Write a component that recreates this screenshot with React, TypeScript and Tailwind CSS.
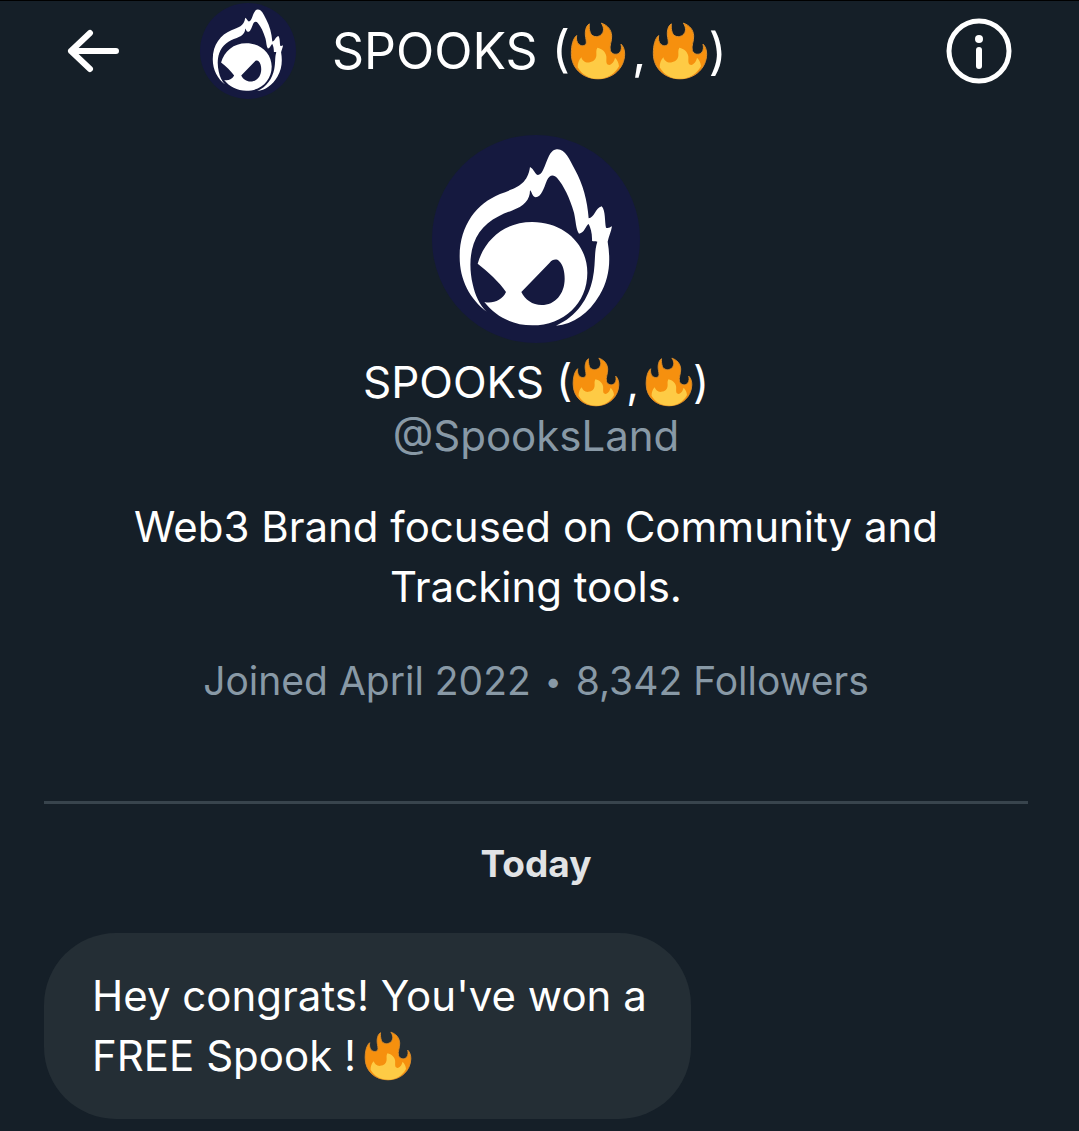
import clsx from 'clsx';

interface Profile {
  name: string;
  handle: string;
  bio: string;
  joined: string;
  followers: string;
}

interface Message {
  id: number;
  text: string;
  fire?: boolean;
}

const profile: Profile = {
  name: 'SPOOKS',
  handle: '@SpooksLand',
  bio: 'Web3 Brand focused on Community and Tracking tools.',
  joined: 'Joined April 2022',
  followers: '8,342 Followers',
};

const messages: Message[] = [
  { id: 1, text: "Hey congrats! You've won a FREE Spook !", fire: true },
];

function Fire({ className }: { className?: string }) {
  return (
    <svg
      viewBox="90 66 168 173"
      role="img"
      aria-label="fire"
      className={clsx('inline-block shrink-0', className)}
    >
      <path
        fill="#f6900e"
        stroke="#dc8e2c"
        strokeWidth="3"
        d="M184 69C202 75 214 88 215 107C216 123 207 137 211 151C215 164 232 166 240 156C245 149 245 140 243 132C250 138 254 149 254 162C253 204 219 236 174 236C129 236 94 205 94 160C94 136 99 115 110 106C108 116 110 127 117 133C126 140 139 137 139 126C139 117 135 108 136 96C137 84 141 75 148 71C147 79 148 90 151 98C156 110 171 113 182 105C194 96 192 80 184 69Z"
      />
      <path
        fill="#fecb45"
        d="M172 143C187 146 197 156 199 169C200 178 197 189 203 193C212 198 222 187 225 173C232 180 236 188 237 198C224 222 201 236 174 236C147 236 126 223 113 201C113 190 116 179 124 171C127 181 135 188 147 187C161 185 168 177 169 167C170 158 167 151 172 143Z"
      />
    </svg>
  );
}

function Avatar({ className }: { className?: string }) {
  return (
    <svg
      viewBox="36 30 624 624"
      role="img"
      aria-label="SPOOKS avatar"
      className={clsx('shrink-0', className)}
    >
      <circle cx="348" cy="342" r="312" fill="#15193f" />
      {/* flame outline */}
      <path
        fill="#fff"
        d="M200 560C150 522 119 465 119 395C119 300 170 236 240 207C285 189 322 182 330 126C342 132 346 150 354 150C378 148 378 76 410 73C436 71 447 101 465 134C489 178 502 226 506 280C522 280 526 249 545 244C557 256 554 291 558 308C564 311 570 307 576 304C573 321 566 336 563 350C573 410 568 460 539 510C507 566 459 598 408 602C470 575 506 520 518 462C528 416 521 383 532 350C526 347 519 350 516 347C517 327 512 309 506 297C497 301 494 324 477 326C467 310 468 289 462 263C449 218 431 182 412 160C401 147 388 150 381 166C371 191 364 217 347 217C335 214 337 201 330 196C330 224 313 244 275 257C224 274 179 304 161 356C148 394 149 438 158 477C165 510 178 539 200 560Z"
      />
      {/* head */}
      <path
        fill="#fff"
        d="M173 416C194 343 254 291 337 291C430 291 502 356 502 443C502 534 432 601 337 601C278 601 226 574 193 531C218 537 247 526 258 501C238 471 205 441 173 416Z"
      />
      <path
        fill="#15193f"
        d="M304 501L389 413C397 403 410 401 417 408C429 419 434 440 434 461C434 507 405 540 365 540C337 540 315 524 304 501Z"
      />
    </svg>
  );
}

function DisplayName({ large = false }: { large?: boolean }) {
  const fire = large ? 'h-[58px] w-14' : 'h-[50px] w-12';
  return (
    <span className="inline-flex items-center whitespace-pre">
      {profile.name} (<Fire className={fire} />
      <span className="px-[6px]">,</span>
      <Fire className={fire} />)
    </span>
  );
}

function Header() {
  return (
    <header className="flex h-[100px] items-center border-t border-black px-[67px]">
      <button type="button" aria-label="Back" className="shrink-0">
        <svg
          viewBox="0 0 53 44"
          className="h-11 w-[53px]"
          fill="none"
          stroke="#fff"
          strokeWidth="6"
          strokeLinecap="round"
          strokeLinejoin="round"
        >
          <path d="M23 4L4 22L23 40M4 22H49" />
        </svg>
      </button>
      <Avatar className="ml-20 size-24" />
      <h1 className="ml-9 flex-1 text-[50px] leading-[60px]">
        <DisplayName large />
      </h1>
      <button type="button" aria-label="Conversation info" className="shrink-0">
        <svg viewBox="0 0 66 66" className="size-[66px]">
          <circle cx="33" cy="33" r="30" fill="none" stroke="#fff" strokeWidth="5" />
          <circle cx="33" cy="21" r="4" fill="#fff" />
          <path d="M33 32V48" stroke="#fff" strokeWidth="6" strokeLinecap="round" />
        </svg>
      </button>
    </header>
  );
}

function ProfileCard() {
  return (
    <section className="flex flex-col items-center border-b-[3px] border-[#38444d] pt-[35px] pb-[90px] text-center">
      <Avatar className="size-52" />
      <h2 className="mt-3 text-[44px] leading-[54px]">
        <DisplayName />
      </h2>
      <a href="#profile" className="text-[42px] leading-[54px] text-[#8899a6]">
        {profile.handle}
      </a>
      <p className="mt-[34px] px-16 text-[42px] leading-[60px]">{profile.bio}</p>
      <p className="mt-[34px] flex items-center gap-[14px] text-[39px] leading-[60px] text-[#8899a6]">
        <span>{profile.joined}</span>
        <span className="text-[30px]">•</span>
        <span>{profile.followers}</span>
      </p>
    </section>
  );
}

function MessageBubble({ message }: { message: Message }) {
  return (
    <li className="w-fit max-w-[647px] rounded-[72px] bg-[#242e35] py-[33px] pr-10 pl-12 text-[42px] leading-[60px]">
      {message.text}
      {message.fire && <Fire className="-mt-4 -mb-2 ml-2 h-[50px] w-12" />}
    </li>
  );
}

export default function App() {
  return (
    <div className="min-h-screen bg-[#151f28] font-['Inter',sans-serif] text-white">
      <Header />
      <main className="pr-[51px] pb-3 pl-11">
        <ProfileCard />
        <h3 className="mt-[30px] text-center text-[37px] leading-[60px] font-bold text-[#e1e3e5]">
          Today
        </h3>
        <ul className="mt-[39px] flex flex-col gap-4">
          {messages.map((message) => (
            <MessageBubble key={message.id} message={message} />
          ))}
        </ul>
      </main>
    </div>
  );
}
